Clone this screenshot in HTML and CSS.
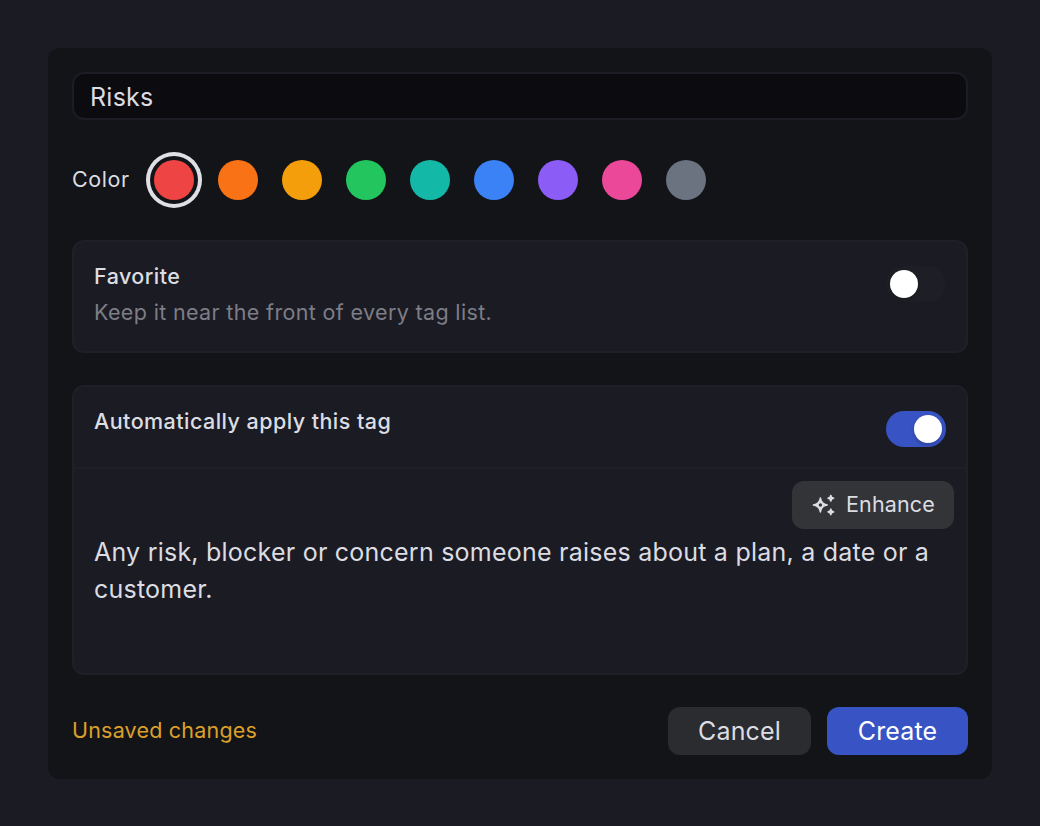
FILE: index.html
```html
<!DOCTYPE html>
<html lang="en">
<head>
  <meta charset="UTF-8">
  <title>New tag</title>
  <link rel="stylesheet" href="styles.css">
</head>
<body>
  <form class="dialog">
    <input class="name-input" type="text" value="Risks" aria-label="Tag name">

    <div class="colors">
      <span class="colors-label">Color</span>
      <button type="button" class="swatch red selected" aria-label="Red"></button>
      <button type="button" class="swatch orange" aria-label="Orange"></button>
      <button type="button" class="swatch amber" aria-label="Amber"></button>
      <button type="button" class="swatch green" aria-label="Green"></button>
      <button type="button" class="swatch teal" aria-label="Teal"></button>
      <button type="button" class="swatch blue" aria-label="Blue"></button>
      <button type="button" class="swatch violet" aria-label="Violet"></button>
      <button type="button" class="swatch pink" aria-label="Pink"></button>
      <button type="button" class="swatch gray" aria-label="Gray"></button>
    </div>

    <section class="card favorite">
      <div>
        <div class="card-title">Favorite</div>
        <div class="card-hint">Keep it near the front of every tag list.</div>
      </div>
      <button type="button" class="toggle" role="switch" aria-checked="false" aria-label="Favorite"><span class="knob"></span></button>
    </section>

    <section class="card auto">
      <div class="auto-header">
        <div class="card-title">Automatically apply this tag</div>
        <button type="button" class="toggle on" role="switch" aria-checked="true" aria-label="Automatically apply this tag"><span class="knob"></span></button>
      </div>
      <div class="auto-body">
        <button type="button" class="btn enhance">
          <svg class="sparkles" viewBox="0 0 24 24" width="24" height="24" aria-hidden="true">
            <path class="star" d="M9.4 5 Q10.2 11.1 16.2 12 Q10.2 12.9 9.4 19 Q8.6 12.9 2.4 12 Q8.6 11.1 9.4 5 Z"/>
            <path class="star" d="M9.4 8.4 L13 12 L9.4 15.6 L5.8 12 Z"/>
            <circle class="star-hole" cx="9.4" cy="12" r="1.7"/>
            <path class="dot" d="M19.8 2.3 L20.7 4.3 L22.7 5.2 L20.7 6.1 L19.8 8.1 L18.9 6.1 L16.9 5.2 L18.9 4.3 Z"/>
            <path class="dot" d="M19.8 16 L20.7 18 L22.7 18.9 L20.7 19.8 L19.8 21.8 L18.9 19.8 L16.9 18.9 L18.9 18 Z"/>
          </svg>
          <span class="enhance-label">Enhance</span>
        </button>
        <p class="prompt">Any risk, blocker or concern someone raises about a plan, a date or a customer.</p>
      </div>
    </section>

    <div class="footer">
      <span class="status">Unsaved changes</span>
      <button type="button" class="btn cancel">Cancel</button>
      <button type="button" class="btn create">Create</button>
    </div>
  </form>
</body>
</html>
```
FILE: styles.css
```css
* {
  box-sizing: border-box;
}

body {
  margin: 0;
  padding: 48px;
  background: #1b1b23;
  color: #dcdde2;
  font-family: Inter, "Liberation Sans", sans-serif;
}

button,
input {
  font-family: inherit;
  color: inherit;
  margin: 0;
}

button {
  border: none;
  padding: 0;
  cursor: pointer;
}

.dialog {
  display: flex;
  flex-direction: column;
  gap: 32px;
  height: 731px;
  padding: 24px;
  border-radius: 12px;
  background: #131418;
}

.name-input {
  width: 100%;
  height: 48px;
  padding: 2px 16px 0;
  border: 2px solid #1c1c25;
  border-radius: 12px;
  background: #0c0b10;
  font-size: 25px;
  letter-spacing: 0.25px;
  outline: none;
}

.colors {
  display: flex;
  align-items: center;
  gap: 24px;
  height: 56px;
}

.colors-label {
  width: 58px;
  padding-bottom: 2px;
  font-size: 21.5px;
  letter-spacing: 0.6px;
}

.swatch {
  width: 40px;
  height: 40px;
  border-radius: 50%;
}

.swatch.selected {
  box-shadow: 0 0 0 4px #131418, 0 0 0 8px #dfe0e5;
}

.red { background: #ef4444; }
.orange { background: #f97316; }
.amber { background: #f59e0b; }
.green { background: #22c55e; }
.teal { background: #14b8a6; }
.blue { background: #3b82f6; }
.violet { background: #8b5cf6; }
.pink { background: #ec4899; }
.gray { background: #6b7280; }

.card {
  border: 2px solid #1e1f27;
  border-radius: 12px;
  background: #1b1b23;
}

.favorite {
  display: flex;
  justify-content: space-between;
  height: 113px;
  padding: 18px 20px;
}

.card-title {
  font-size: 21.5px;
  font-weight: 500;
  line-height: 32px;
  letter-spacing: 0.45px;
}

.card-hint {
  margin-top: 4px;
  color: #7d7d87;
  font-size: 21.5px;
  line-height: 32px;
  letter-spacing: 0.35px;
}

.toggle {
  display: flex;
  flex: none;
  width: 60px;
  height: 36px;
  margin-top: 6px;
  padding: 4px;
  border-radius: 18px;
  background: #1e1e26;
}

.toggle.on {
  justify-content: flex-end;
  background: #3853c4;
}

.knob {
  width: 28px;
  height: 28px;
  border-radius: 50%;
  background: #fff;
  box-shadow: 0 2px 4px rgba(0, 0, 0, 0.2);
}

.auto {
  height: 290px;
}

.auto-header {
  display: flex;
  justify-content: space-between;
  height: 82px;
  padding: 18px 20px;
  border-bottom: 2px solid #1e1f27;
}

.auto-body {
  display: flex;
  flex-direction: column;
  padding: 12px 12px 0 20px;
}

.btn {
  height: 48px;
  border-radius: 12px;
  font-size: 25px;
  letter-spacing: 0.15px;
}

.enhance {
  display: flex;
  align-items: center;
  align-self: flex-end;
  gap: 11px;
  width: 162px;
  padding-left: 19px;
  background: #333438;
  font-size: 21.5px;
}

.enhance-label {
  padding-bottom: 2px;
}

.sparkles {
  flex: none;
}

.star {
  fill: #dcdde2;
  stroke: #dcdde2;
  stroke-width: 1.6;
  stroke-linejoin: round;
}

.star-hole {
  fill: #333438;
}

.dot {
  fill: #dcdde2;
  stroke: #dcdde2;
  stroke-width: 1.4;
  stroke-linejoin: round;
}

.prompt {
  margin: 5px 0 0;
  font-size: 25px;
  line-height: 37px;
  letter-spacing: 0.23px;
}

.footer {
  display: flex;
  align-items: center;
  gap: 16px;
}

.status {
  flex: 1;
  padding-bottom: 2px;
  color: #dba02b;
  font-size: 21.5px;
  letter-spacing: 0.2px;
}

.cancel {
  width: 143px;
  background: #2b2c30;
}

.create {
  width: 141px;
  background: #3853c4;
  color: #fff;
}
```
